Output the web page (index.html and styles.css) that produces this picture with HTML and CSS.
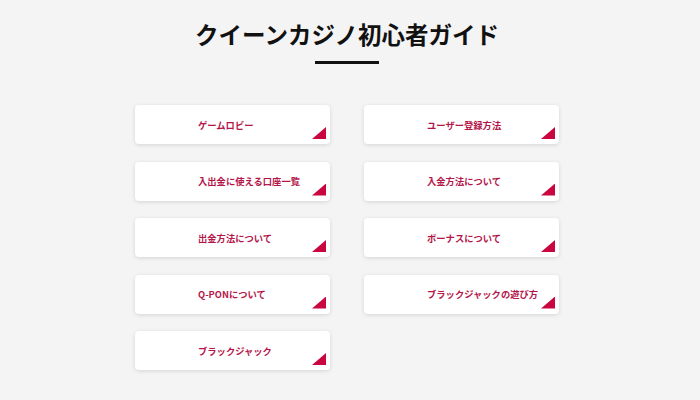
FILE: index.html
```html
<!DOCTYPE html>
<html lang="ja">
<head>
<meta charset="utf-8">
<title>クイーンカジノ初心者ガイド</title>
<link rel="stylesheet" href="styles.css">
</head>
<body>
<main class="guide">
  <h1 class="guide-title">クイーンカジノ初心者ガイド</h1>
  <div class="guide-rule"></div>
  <div class="guide-grid">
    <a class="card" href="#"><span class="card-label">ゲームロビー</span></a>
    <a class="card" href="#"><span class="card-label">ユーザー登録方法</span></a>
    <a class="card" href="#"><span class="card-label">入出金に使える口座一覧</span></a>
    <a class="card" href="#"><span class="card-label">入金方法について</span></a>
    <a class="card" href="#"><span class="card-label">出金方法について</span></a>
    <a class="card" href="#"><span class="card-label">ボーナスについて</span></a>
    <a class="card" href="#"><span class="card-label">Q-PONについて</span></a>
    <a class="card" href="#"><span class="card-label">ブラックジャックの遊び方</span></a>
    <a class="card" href="#"><span class="card-label">ブラックジャック</span></a>
  </div>
</main>
</body>
</html>
```

FILE: styles.css
```css
html, body {
  margin: 0;
  padding: 0;
}
body {
  background: #f4f4f4;
  font-family: "Noto Sans CJK JP", "Noto Sans", sans-serif;
  width: 700px;
  height: 400px;
  overflow: hidden;
}
.guide {
  display: flex;
  flex-direction: column;
  align-items: center;
  padding-top: 17px;
  padding-right: 6px;
}
.guide-title {
  margin: 0;
  font-size: 23.5px;
  line-height: 35px;
  font-weight: 700;
  color: #111;
  letter-spacing: 0;
}
.guide-rule {
  width: 64px;
  height: 3px;
  background: #111;
  margin-top: 9px;
}
.guide-grid {
  margin-top: 41px;
  display: grid;
  grid-template-columns: 195px 195px;
  grid-auto-rows: 39px;
  column-gap: 34px;
  row-gap: 17.5px;
}
.card {
  position: relative;
  display: flex;
  align-items: center;
  padding-left: 63px;
  background: #fff;
  border-radius: 4px;
  box-shadow: 0 1px 4px rgba(0, 0, 0, 0.13);
  text-decoration: none;
}
.card::after {
  content: "";
  position: absolute;
  right: 4px;
  bottom: 5px;
  width: 14px;
  height: 12px;
  background: #c9063f;
  clip-path: polygon(100% 0, 100% 100%, 0 100%);
}
.card-label {
  font-size: 9.3px;
  font-weight: 700;
  color: #b4164a;
  white-space: nowrap;
}
```
